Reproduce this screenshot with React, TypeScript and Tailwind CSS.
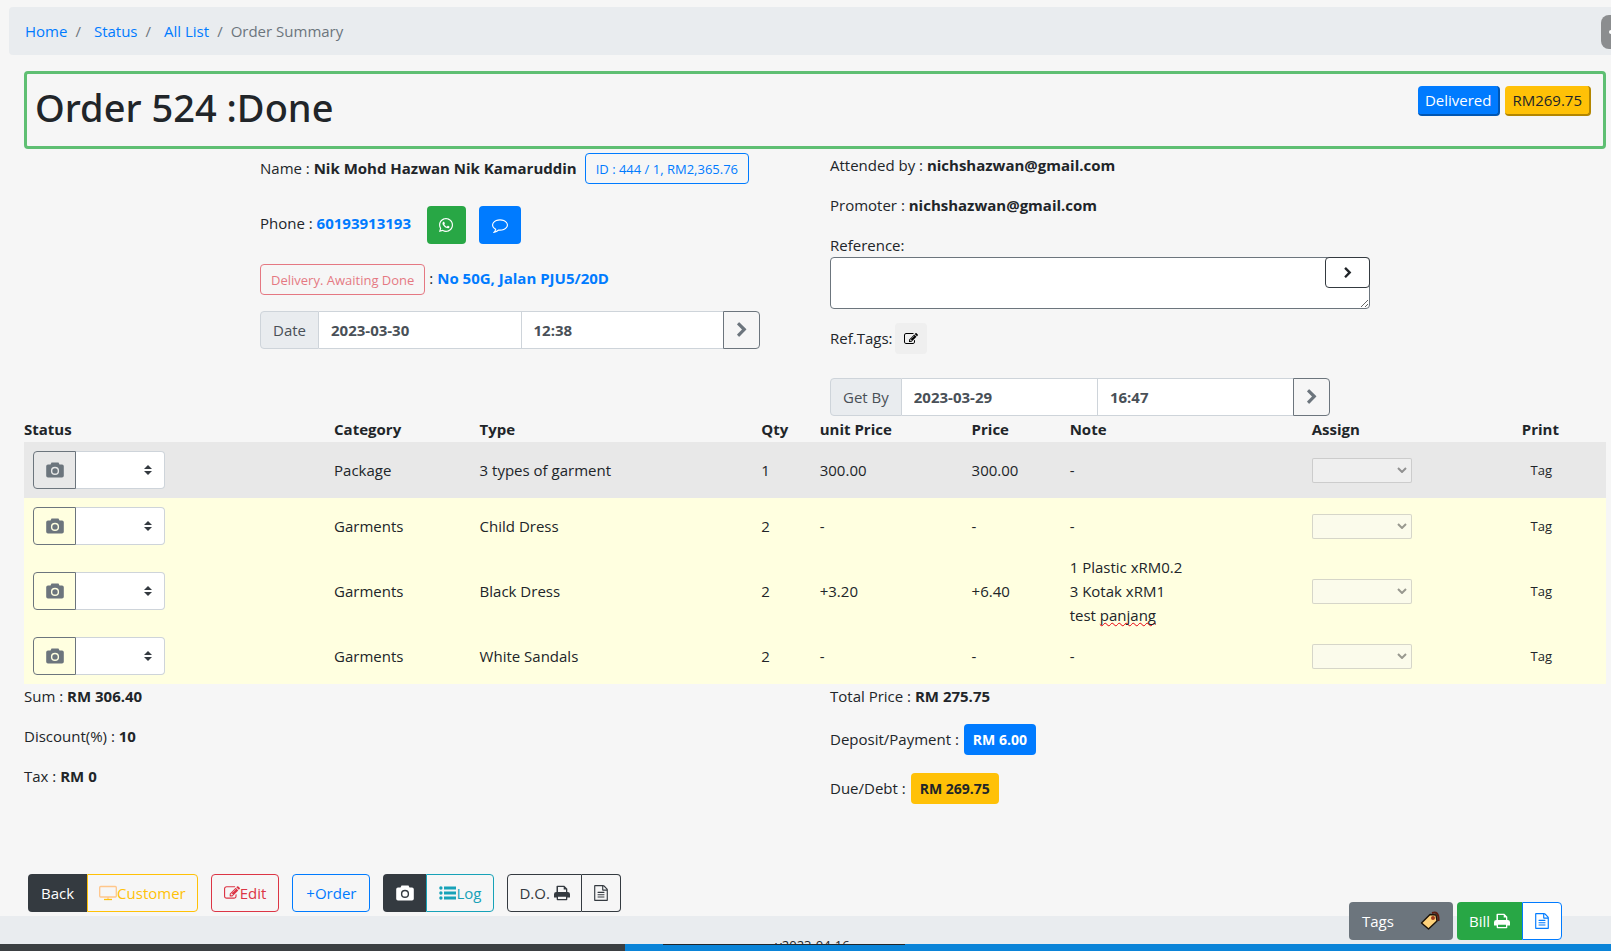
import type { ReactNode } from "react";
import { FaWhatsapp } from "react-icons/fa";

const icons = {
  edit: "M888 1184l116-116-152-152-116 116v56h96v96h56zm440-720q-16-16-33 1l-350 350q-17 17-1 33t33-1l350-350q17-17 1-33zm80 594v190q0 119-84.5 203.5t-203.5 84.5h-832q-119 0-203.5-84.5t-84.5-203.5v-832q0-119 84.5-203.5t203.5-84.5h832q63 0 117 25 15 7 18 23 3 17-9 29l-49 49q-14 14-32 8-23-6-45-6h-832q-66 0-113 47t-47 113v832q0 66 47 113t113 47h832q66 0 113-47t47-113v-126q0-13 9-22l64-64q15-15 35-7t20 29zm-96-738l288 288-672 672h-288v-288zm444 132l-92 92-288-288 92-92q28-28 68-28t68 28l152 152q28 28 28 68t-28 68z",
  file: "M1596 380q28 28 48 76t20 88v1152q0 40-28 68t-68 28h-1344q-40 0-68-28t-28-68v-1600q0-40 28-68t68-28h896q40 0 88 20t76 48zm-444-244v376h376q-10-29-22-41l-313-313q-12-12-41-22zm384 1528v-1024h-416q-40 0-68-28t-28-68v-416h-768v1536h1280zm-1024-864q0-14 9-23t23-9h704q14 0 23 9t9 23v64q0 14-9 23t-23 9h-704q-14 0-23-9t-9-23v-64zm736 224q14 0 23 9t9 23v64q0 14-9 23t-23 9h-704q-14 0-23-9t-9-23v-64q0-14 9-23t23-9h704zm0 256q14 0 23 9t9 23v64q0 14-9 23t-23 9h-704q-14 0-23-9t-9-23v-64q0-14 9-23t23-9h704z",
  comment: "M896 384q-204 0-381.5 69.5t-282 187.5-104.5 255q0 112 71.5 213.5t201.5 175.5l87 50-27 96q-24 91-70 172 152-63 275-171l43-38 57 6q69 8 130 8 204 0 381.5-69.5t282-187.5 104.5-255-104.5-255-282-187.5-381.5-69.5zm896 512q0 174-120 321.5t-326 233-450 85.5q-70 0-145-8-198 175-460 242-49 14-114 22h-5q-15 0-27-10.5t-16-27.5v-1q-3-4-.5-12t2-10 4.5-9.5l6-9 7-8.5 8-9q7-8 31-34.5t34.5-38 31-39.5 32.5-51 27-59 26-76q-157-89-247.5-220t-90.5-281q0-174 120-321.5t326-233 450-85.5 450 85.5 326 233 120 321.5z",
  chevron: "M1363 877l-742 742q-19 19-45 19t-45-19l-166-166q-19-19-19-45t19-45l531-531-531-531q-19-19-19-45t19-45l166-166q19-19 45-19t45 19l742 742q19 19 19 45t-19 45z",
};

function Icon({ name, className = "size-4" }: { name: keyof typeof icons; className?: string }) {
  return (
    <svg viewBox="0 0 1792 1792" fill="currentColor" className={`shrink-0 ${className}`} aria-hidden="true">
      <path d={icons[name]} />
    </svg>
  );
}

function DesktopIcon() {
  return (
    <svg viewBox="0 0 18 16" fill="none" stroke="#ffc68a" strokeWidth="1.3" className="h-4 w-[18px] shrink-0" aria-hidden="true">
      <rect x="0.7" y="1.5" width="16.6" height="10.5" rx="1" />
      <path d="M9 12v2" />
      <path d="M5 14.5h8" stroke="currentColor" />
    </svg>
  );
}

function CameraIcon() {
  return (
    <svg viewBox="0 0 18 16" fill="currentColor" className="h-4 w-[18px] shrink-0" aria-hidden="true">
      <path fillRule="evenodd" d="M5.500 0.500h7l1 2h2.500a1.800 1.800 0 0 1 1.800 1.800v9.400a1.800 1.800 0 0 1-1.800 1.800H2a1.800 1.800 0 0 1-1.800-1.800V4.300A1.800 1.800 0 0 1 2 2.500h2.500zM9 4.800a4.100 4.100 0 1 0 0 8.200 4.100 4.100 0 0 0 0-8.200zm0 1.400a2.700 2.700 0 1 1 0 5.400 2.700 2.700 0 0 1 0-5.400z" />
    </svg>
  );
}

function ListIcon() {
  return (
    <svg viewBox="0 0 17 16" fill="currentColor" className="h-4 w-[17px] shrink-0" aria-hidden="true">
      <path d="M5 1.500h12v3H5zM5 6.500h12v3H5zM5 11.500h12v3H5z" />
      <circle cx="1.900" cy="3" r="1.700" />
      <circle cx="1.900" cy="8" r="1.700" />
      <circle cx="1.900" cy="13" r="1.700" />
    </svg>
  );
}

function PrintIcon() {
  return (
    <svg viewBox="0 0 16 16" fill="currentColor" className="size-4 shrink-0" aria-hidden="true">
      <path fillRule="evenodd" d="M2.500 1.500a.8.8 0 0 1 .8-.8h7l3 3V7h.4A2.300 2.300 0 0 1 16 9.300v3.200h-2.700v2a.8.8 0 0 1-.8.800h-9a.8.8 0 0 1-.8-.800v-2H0V9.300A2.300 2.300 0 0 1 2.300 7h.2zM4 2v5h8V4.500H9.700V2zM4 11.700V14h8v-2.300z" />
    </svg>
  );
}

const rows = [
  { category: "Package", type: "3 types of garment", qty: 1, unit: "300.00", price: "300.00", color: "bg-[#e8e8e8]" },
  { category: "Garments", type: "Child Dress", qty: 2, unit: "-", price: "-", color: "bg-[#ffffe0]" },
  { category: "Garments", type: "Black Dress", qty: 2, unit: "+3.20", price: "+6.40", color: "bg-[#ffffe0]", note: true },
  { category: "Garments", type: "White Sandals", qty: 2, unit: "-", price: "-", color: "bg-[#ffffe0]" },
];

function DateGroup({ label, date, time }: { label: string; date: string; time: string }) {
  return (
    <div className="flex h-[38px] w-[500px]">
      <span className="flex items-center rounded-l border border-[#ced4da] bg-[#e9ecef] px-3 text-[#495057]">{label}</span>
      <input aria-label={`${label} date`} defaultValue={date} className="w-0 flex-1 border-y border-[#ced4da] bg-white px-3 font-bold text-[#495057]" />
      <input aria-label={`${label} time`} defaultValue={time} className="w-0 flex-1 border-y border-l border-[#ced4da] bg-white px-3 font-bold text-[#495057]" />
      <button aria-label={`Save ${label}`} className="flex w-[37px] items-center justify-center rounded-r border border-[#6c757d] text-[#6c757d]">
        <Icon name="chevron" />
      </button>
    </div>
  );
}

function Line({ label, children }: { label: string; children: ReactNode }) {
  return (
    <p className="mb-4">
      {label} : <b>{children}</b>
    </p>
  );
}

export default function App() {
  return (
    <div className="flex h-screen flex-col overflow-hidden bg-[#f6f6f6] font-['Open_Sans','Noto_Sans',sans-serif] text-[15px] leading-6 text-[#212529]">
      <nav aria-label="Breadcrumb" className="relative mt-[7px] ml-[9px] flex h-12 shrink-0 items-center gap-2 rounded-l bg-[#e9ecef] px-4 text-[#6c757d]">
        <a href="#" className="text-[#007bff]">Home</a>
        <span className="mr-[5px]">/</span>
        <a href="#" className="text-[#007bff]">Status</a>
        <span className="mr-[5px]">/</span>
        <a href="#" className="text-[#007bff]">All List</a>
        <span>/</span>
        <span>Order Summary</span>
        <button aria-label="Open panel" className="absolute top-2 right-0 flex h-[34px] w-[10px] items-center justify-end rounded-l-lg bg-[#8b8d8f]">
          <span className="h-1 w-[2px] rounded-l bg-white" />
        </button>
      </nav>

      <main className="mt-4 mr-[5px] ml-6 flex-1">
        <header className="flex h-[78px] items-start justify-between rounded border-[3px] border-[#5fbf73] pr-3 pl-2">
          <h1 className="pt-2 font-['Noto_Sans',sans-serif] text-[38px] leading-[50px] font-medium">Order 524 :Done</h1>
          <div className="flex gap-[5px] pt-3">
            <button className="h-[30px] rounded border-r-2 border-b-2 border-[#0056b3] bg-[#007bff] px-[7px] text-white">Delivered</button>
            <button className="h-[30px] rounded border-r-2 border-b-2 border-[#b38600] bg-[#ffc107] px-[7px]">RM269.75</button>
          </div>
        </header>

        <section className="grid h-[268px] grid-cols-2 gap-[30px]">
          <div className="pt-1 pl-[236px]">
            <div className="flex items-center gap-2 whitespace-nowrap">
              <span className="pb-[2px]">Name : <b>Nik Mohd Hazwan Nik Kamaruddin</b></span>
              <button className="h-[31px] rounded border border-[#007bff] px-[10px] text-[13px] text-[#007bff]">ID : 444 / 1, RM2,365.76</button>
            </div>
            <div className="mt-[22px] flex items-center">
              <span className="pb-[4px]">Phone : <a href="#" className="font-bold text-[#007bff]">60193913193</a></span>
              <button aria-label="WhatsApp" className="ml-4 flex h-[38px] w-[39px] items-center justify-center rounded bg-[#28a745] text-white"><FaWhatsapp size={16} /></button>
              <button aria-label="Message" className="ml-[13px] flex h-[38px] w-[42px] items-center justify-center rounded bg-[#007bff] text-white"><Icon name="comment" /></button>
            </div>
            <div className="mt-5 flex items-center gap-1">
              <button disabled className="h-[31px] rounded border border-[#dc3545] px-[10px] text-[13px] text-[#dc3545] opacity-65">Delivery. Awaiting Done</button>
              <span className="pb-[4px]">: <a href="#" className="font-bold text-[#007bff]">No 50G, Jalan PJU5/20D</a></span>
            </div>
            <div className="mt-4">
              <DateGroup label="Date" date="2023-03-30" time="12:38" />
            </div>
          </div>

          <div className="pt-1">
            <Line label="Attended by">nichshazwan@gmail.com</Line>
            <Line label="Promoter">nichshazwan@gmail.com</Line>
            <label htmlFor="reference" className="block">Reference:</label>
            <div className="relative h-[52px] w-[540px]">
              <textarea id="reference" className="block size-full rounded border border-[#6c757d] bg-white" />
              <button aria-label="Save reference" className="absolute top-0 right-0 flex h-[31px] w-[45px] items-center justify-center rounded border border-[#343a40] bg-white">
                <Icon name="chevron" className="size-3" />
              </button>
            </div>
            <div className="mt-[14px] mb-6 flex items-center gap-[2px]">
              <span className="pb-[2px]">Ref.Tags:</span>
              <button aria-label="Edit tags" className="flex h-[31px] w-8 items-center justify-center rounded bg-[#efefef] text-black"><Icon name="edit" className="size-[14px]" /></button>
            </div>
            <DateGroup label="Get By" date="2023-03-29" time="16:47" />
          </div>
        </section>

        <table className="w-full table-fixed border-collapse text-left">
          <thead>
            <tr className="h-[25px]">
              <th className="w-[19.6%] pb-px">Status</th>
              <th className="w-[9.2%] pb-px">Category</th>
              <th className="w-[17.8%] pb-px">Type</th>
              <th className="w-[3.7%] pb-px">Qty</th>
              <th className="w-[9.6%] pb-px">unit Price</th>
              <th className="w-[6.2%] pb-px">Price</th>
              <th className="w-[15.3%] pb-px">Note</th>
              <th className="w-[10.3%] pb-px">Assign</th>
              <th className="pb-px text-center">Print</th>
            </tr>
          </thead>
          <tbody>
            {rows.map((row) => (
              <tr key={row.type} className={`h-14 ${row.color}`}>
                <td className="pl-[9px]">
                  <div className="flex h-[38px] w-[132px]">
                    <button aria-label={`Photo of ${row.type}`} className="flex w-[43px] items-center justify-center rounded-l border border-[#6c757d] text-[#6c757d]">
                      <CameraIcon />
                    </button>
                    <div className="relative flex-1">
                      <select aria-label={`Status of ${row.type}`} className="size-full appearance-none rounded-r border border-l-0 border-[#ced4da] bg-white" />
                      <svg viewBox="0 0 4 5" className="pointer-events-none absolute top-[14px] right-[13px] h-[10px] w-2 fill-[#343a40]" aria-hidden="true">
                        <path d="M2 0L0 2h4zm0 5L0 3h4z" />
                      </svg>
                    </div>
                  </div>
                </td>
                <td>{row.category}</td>
                <td>{row.type}</td>
                <td>{row.qty}</td>
                <td>{row.unit}</td>
                <td>{row.price}</td>
                <td className="py-px">
                  {row.note ? (
                    <>
                      1 Plastic xRM0.2<br />
                      3 Kotak xRM1<br />
                      test <span className="underline decoration-red-600 decoration-wavy decoration-1 [text-decoration-skip-ink:none]">panjang</span>
                    </>
                  ) : "-"}
                </td>
                <td>
                  <div className="relative h-[25px] w-[100px] opacity-70">
                    <select disabled aria-label={`Assign ${row.type}`} className="block size-full appearance-none rounded-xs border border-[#767676]/40 bg-[#f8f8f8]/70" />
                    <svg viewBox="0 0 10 6" className="pointer-events-none absolute top-[9px] right-[5px] h-[6px] w-[10px] fill-none stroke-[#6d6d6d] stroke-2" aria-hidden="true">
                      <path d="M1 1l4 4 4-4" />
                    </svg>
                  </div>
                </td>
                <td className="pl-[2px] text-center text-[13px]">Tag</td>
              </tr>
            ))}
          </tbody>
        </table>

        <section className="grid grid-cols-2 gap-[30px]">
          <div>
            <Line label="Sum">RM 306.40</Line>
            <Line label="Discount(%)">10</Line>
            <Line label="Tax">RM 0</Line>
          </div>
          <div>
            <Line label="Total Price">RM 275.75</Line>
            <div className="mb-[18px] flex items-center gap-[5px]">
              <span className="pb-[2px]">Deposit/Payment :</span>
              <button className="h-[31px] rounded bg-[#007bff] px-[9px] text-[14px] font-bold text-white">RM 6.00</button>
            </div>
            <div className="flex items-center gap-[5px]">
              <span className="pb-[2px]">Due/Debt :</span>
              <button className="h-[31px] rounded bg-[#ffc107] px-[9px] text-[14px] font-bold">RM 269.75</button>
            </div>
          </div>
        </section>
      </main>

      <div className="mb-1 ml-7 flex h-[38px] shrink-0 gap-[13px]">
        <div className="flex">
          <button className="rounded-l bg-[#343a40] px-[13px] text-white">Back</button>
          <button className="flex items-center rounded-r border border-[#ffc107] px-[11px] text-[#ffc107]"><DesktopIcon />Customer</button>
        </div>
        <button className="flex items-center rounded border border-[#dc3545] px-3 text-[#dc3545]"><Icon name="edit" />Edit</button>
        <button className="rounded border border-[#007bff] px-[13px] text-[#007bff]">+Order</button>
        <div className="flex">
          <button aria-label="Camera" className="flex w-[43px] items-center justify-center rounded-l bg-[#343a40] text-white"><CameraIcon /></button>
          <button className="flex items-center rounded-r border border-[#17a2b8] px-3 text-[#17a2b8]"><ListIcon />Log</button>
        </div>
        <div className="flex">
          <button className="flex items-center gap-1 rounded-l border border-[#343a40] px-[11px] text-[#343a40]">D.O. <PrintIcon /></button>
          <button aria-label="D.O. document" className="flex w-[39px] items-center justify-center rounded-r border border-l-0 border-[#343a40] text-[#343a40]"><Icon name="file" /></button>
        </div>
      </div>

      <footer className="relative h-7 shrink-0 bg-[#e9ecef]">
        <div className="h-full overflow-hidden pt-[17px] pl-[14px] text-center text-[13px]">v2023-04-16</div>
        <div className="absolute right-[49px] bottom-1 flex h-[38px]">
          <button className="mr-1 flex w-[104px] items-center justify-between rounded bg-[#6c757d] px-[13px] text-white">
            Tags
            <svg viewBox="0 0 20 20" className="size-5" stroke="#1b1208" strokeWidth="1.4" strokeLinejoin="round" aria-hidden="true">
              <path d="M12 2c4-1.500 7 0 6.500 8" fill="none" stroke="#5a1d10" strokeWidth="2" />
              <path d="M10 3.500l6 .5 1 6-8.500 8L1.500 12z" fill="#ffd27a" />
              <circle cx="13" cy="7" r="1.300" fill="#a33b1c" stroke="#a33b1c" />
            </svg>
          </button>
          <button className="flex items-center gap-1 rounded-l bg-[#28a745] px-3 text-white">Bill <PrintIcon /></button>
          <button aria-label="Bill document" className="flex w-10 items-center justify-center rounded-r border border-[#007bff] bg-white text-[#007bff]"><Icon name="file" /></button>
        </div>
      </footer>
      <div className="flex h-[7px] shrink-0 bg-[#0a84d8]">
        <div className="w-[38.8%] bg-[#3b3f42]" />
        <div className="ml-[38px] h-px w-[15%] bg-[#20262b]" />
      </div>
    </div>
  );
}
